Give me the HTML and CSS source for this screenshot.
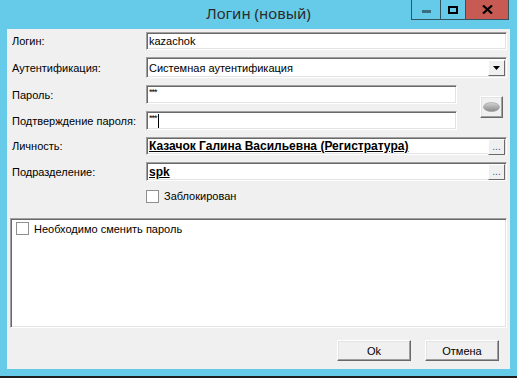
FILE: index.html
```html
<!DOCTYPE html>
<html lang="ru">
<head>
    <meta charset="UTF-8">
    <title>Логин (новый)</title>
    <link rel="stylesheet" href="styles.css">
</head>
<body>
    <div class="window">
        <div class="titlebar">
            <div></div>
            <div class="title">Логин (новый)</div>
            <div class="controls">
                <span class="ctl ctl-min"><i></i></span>
                <span class="ctl ctl-max"><i></i></span>
                <span class="ctl ctl-close">
                    <svg width="11" height="9" viewBox="0 0 11 9"><path d="M1 0.5 L10 8.5 M10 0.5 L1 8.5" stroke="#000" stroke-width="2.2"/></svg>
                </span>
            </div>
        </div>

        <div class="client">
            <div class="form">
                <label class="lbl">Логин:</label>
                <div class="field wide"><span class="val">kazachok</span></div>

                <label class="lbl">Аутентификация:</label>
                <div class="field wide combo">
                    <span class="val">Системная аутентификация</span>
                    <span class="drop">
                        <svg width="7" height="4" viewBox="0 0 7 4"><path d="M0 0 H7 L3.5 4 Z" fill="#000"/></svg>
                    </span>
                </div>

                <label class="lbl">Пароль:</label>
                <div class="field"><span class="val stars">***</span></div>

                <div class="eye-btn">
                    <svg width="17" height="10" viewBox="0 0 17 10">
                        <defs>
                            <linearGradient id="g" x1="0" y1="0" x2="0" y2="1">
                                <stop offset="0" stop-color="#d4d4d4"/>
                                <stop offset="1" stop-color="#8a8a8a"/>
                            </linearGradient>
                        </defs>
                        <ellipse cx="8.5" cy="5" rx="8" ry="4.5" fill="url(#g)" stroke="#9a9a9a" stroke-width="0.6"/>
                    </svg>
                </div>

                <label class="lbl">Подтверждение пароля:</label>
                <div class="field"><span class="stars">***</span><span class="caret"></span></div>

                <label class="lbl">Личность:</label>
                <div class="field wide">
                    <span class="val link">Казачок Галина Васильевна (Регистратура)</span>
                    <span class="dots">...</span>
                </div>

                <label class="lbl">Подразделение:</label>
                <div class="field wide">
                    <span class="val link">spk</span>
                    <span class="dots">...</span>
                </div>

                <div></div>
                <div class="check-row wide">
                    <span class="box"></span>
                    <span>Заблокирован</span>
                </div>
            </div>

            <div class="panel">
                <div class="check-row">
                    <span class="box"></span>
                    <span>Необходимо сменить пароль</span>
                </div>
            </div>

            <div class="footer">
                <button class="btn">Ok</button>
                <button class="btn">Отмена</button>
            </div>
        </div>
        <div class="bottom"></div>
    </div>
</body>
</html>
```

FILE: styles.css
```css
* {
    margin: 0;
    padding: 0;
    box-sizing: border-box;
}

body {
    background-color: #66cbe9;
    font-family: "Liberation Sans", Arial, sans-serif;
    font-size: 11px;
    color: #000;
    width: 517px;
    height: 378px;
    overflow: hidden;
}

.window {
    display: flex;
    flex-direction: column;
    height: 378px;
}

.titlebar {
    height: 29px;
    display: grid;
    grid-template-columns: 1fr auto 1fr;
}

.title {
    font-family: "Noto Sans", "Open Sans", sans-serif;
    font-size: 15px;
    color: #2b2b2b;
    padding-top: 3px;
}

.controls {
    display: flex;
    justify-content: flex-end;
    align-items: flex-start;
    padding-right: 8px;
}

.ctl {
    height: 20px;
    border: 1px solid #2f5563;
    border-top: none;
    display: flex;
    align-items: center;
    justify-content: center;
}

.ctl-min {
    width: 29px;
    border-right: none;
}

.ctl-min i {
    width: 9px;
    height: 3px;
    background: #3b6d80;
    margin-top: 3px;
}

.ctl-max {
    width: 26px;
}

.ctl-max i {
    width: 10px;
    height: 8px;
    border: 2px solid #000;
}

.ctl-close {
    width: 43px;
    background: #c75a52;
    border-left: none;
}

.client {
    flex: 1;
    margin: 0 7px;
    background: #f0f0f0;
    padding: 3px 3px 6px 3px;
    display: flex;
    flex-direction: column;
}

.form {
    display: grid;
    grid-template-columns: 136px 311px 1fr;
    grid-template-rows: 18px 21px 19px 19px 18px 19px 13px;
    row-gap: 7px;
}

.lbl {
    padding-left: 2px;
    align-self: center;
    white-space: nowrap;
}

.field {
    background: #fff;
    border-top: 1px solid #a0a0a0;
    border-left: 1px solid #a0a0a0;
    border-bottom: 1px solid #fff;
    border-right: 1px solid #fff;
    box-shadow: inset 1px 1px 0 #696969, inset -1px -1px 0 #e3e3e3;
    display: flex;
    align-items: center;
    padding: 0 2px;
}

.wide {
    grid-column: 2 / 4;
}

.val {
    white-space: nowrap;
    flex: 1;
}

.stars {
    font-size: 9px;
    letter-spacing: -1px;
    align-self: flex-start;
    margin-top: 1px;
}

.caret {
    align-self: flex-start;
    margin-top: 2px;
    margin-left: 1px;
    width: 1px;
    height: 14px;
    background: #000;
}

.link {
    font-weight: bold;
    text-decoration: underline;
    font-size: 12px;
}

.combo .drop,
.dots {
    width: 17px;
    height: 16px;
    background: #f0f0f0;
    border-top: 1px solid #fff;
    border-left: 1px solid #fff;
    border-right: 1px solid #696969;
    border-bottom: 1px solid #696969;
    display: flex;
    align-items: center;
    justify-content: center;
    margin-right: -1px;
}

.dots {
    font-size: 10px;
    line-height: 8px;
    color: #3a55a0;
    align-items: flex-end;
    padding-bottom: 3px;
    margin-top: 1px;
}

.eye-btn {
    grid-column: 3;
    grid-row: 3 / 5;
    align-self: center;
    justify-self: end;
    margin-right: 4px;
    margin-top: -1px;
    width: 23px;
    height: 22px;
    background: #f0f0f0;
    border-top: 1px solid #fff;
    border-left: 1px solid #fff;
    border-right: 1px solid #696969;
    border-bottom: 1px solid #696969;
    box-shadow: inset -1px -1px 0 #a0a0a0, inset 1px 1px 0 #e3e3e3;
    display: flex;
    align-items: center;
    justify-content: center;
}

.check-row {
    display: flex;
    align-items: center;
    gap: 5px;
}

.form .check-row {
    margin-top: 3px;
}

.box {
    width: 13px;
    height: 13px;
    background: #fff;
    border: 1px solid #8f8f8f;
}

.panel {
    margin-top: 17px;
    height: 110px;
    background: #fff;
    border-top: 1px solid #a0a0a0;
    border-left: 1px solid #a0a0a0;
    border-bottom: 1px solid #fff;
    border-right: 1px solid #fff;
    box-shadow: inset 1px 1px 0 #696969, inset -1px -1px 0 #e3e3e3;
    padding: 3px 5px;
}

.footer {
    margin-top: 12px;
    display: flex;
    justify-content: flex-end;
    gap: 14px;
    padding-right: 8px;
}

.btn {
    width: 74px;
    height: 21px;
    font-family: "Liberation Sans", Arial, sans-serif;
    font-size: 11px;
    background: #f0f0f0;
    border-top: 1px solid #fff;
    border-left: 1px solid #fff;
    border-right: 1px solid #696969;
    border-bottom: 1px solid #696969;
    box-shadow: inset -1px -1px 0 #a0a0a0, inset 1px 1px 0 #e3e3e3;
}

.bottom {
    height: 9px;
    border-bottom: 2px solid #1e1e1e;
}
```
